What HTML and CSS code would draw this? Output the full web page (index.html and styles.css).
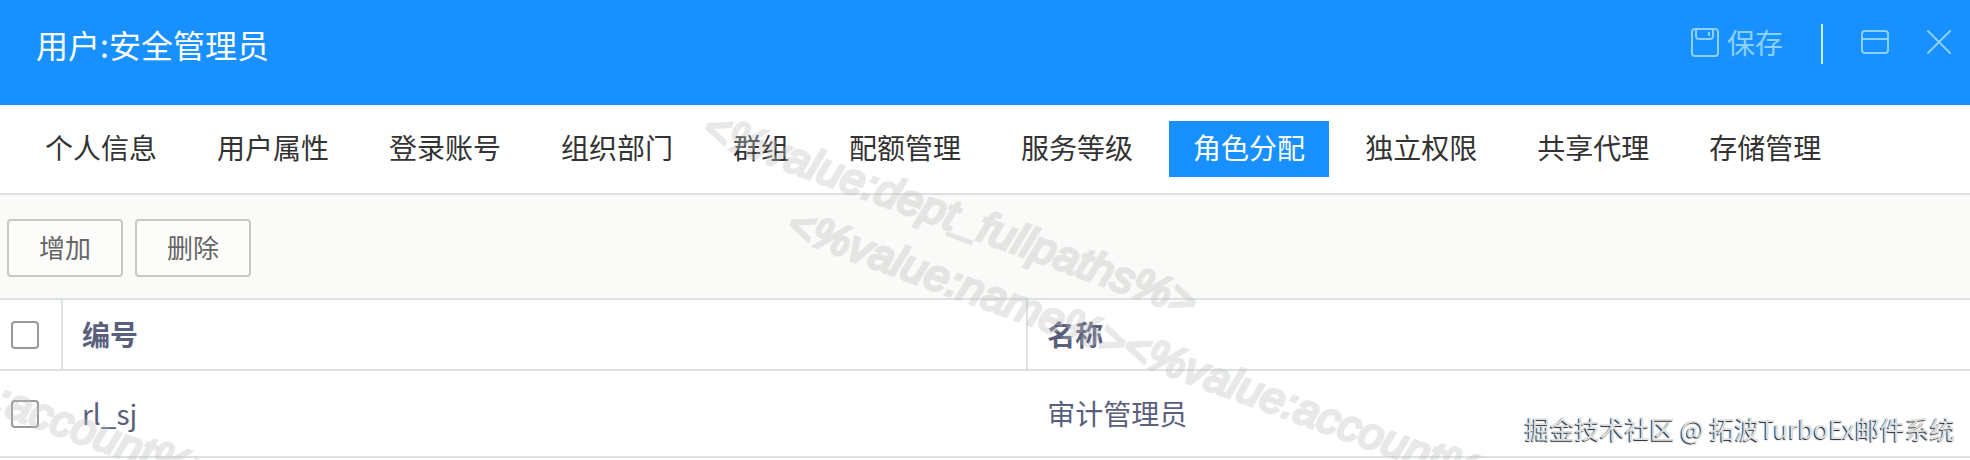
FILE: index.html
```html
<!DOCTYPE html>
<html lang="zh-CN">
<head>
  <meta charset="UTF-8">
  <meta name="viewport" content="width=device-width, initial-scale=1.0">
  <title>用户:安全管理员</title>
  <link rel="stylesheet" href="styles.css">
</head>
<body>

  <header class="header">
    <h1 class="header-title">用户:安全管理员</h1>
    <div class="header-actions">
      <button class="save-button" type="button">
        <svg width="28" height="29" viewBox="0 0 28 29" fill="none" stroke="currentColor" stroke-width="2">
          <rect x="1" y="1" width="26" height="27" rx="3"/>
          <path d="M5 1v7a3 3 0 0 0 3 3h11a3 3 0 0 0 3-3V1M18 4v4"/>
        </svg>
        保存
      </button>
      <span class="divider"></span>
      <button class="icon-button window-button" type="button" aria-label="窗口">
        <svg width="28" height="24" viewBox="0 0 28 24" fill="none" stroke="currentColor" stroke-width="2">
          <rect x="1" y="1" width="26" height="22" rx="3"/>
          <path d="M1 9h26"/>
        </svg>
      </button>
      <button class="icon-button" type="button" aria-label="关闭">
        <svg width="24" height="24" viewBox="0 0 24 24" fill="none" stroke="currentColor" stroke-width="2" stroke-linecap="round">
          <path d="M1 1l22 22M23 1L1 23"/>
        </svg>
      </button>
    </div>
  </header>

  <nav class="tabs">
    <a class="tab" href="#">个人信息</a>
    <a class="tab" href="#">用户属性</a>
    <a class="tab" href="#">登录账号</a>
    <a class="tab" href="#">组织部门</a>
    <a class="tab" href="#">群组</a>
    <a class="tab" href="#">配额管理</a>
    <a class="tab" href="#">服务等级</a>
    <a class="tab active" href="#">角色分配</a>
    <a class="tab" href="#">独立权限</a>
    <a class="tab" href="#">共享代理</a>
    <a class="tab" href="#">存储管理</a>
  </nav>

  <div class="toolbar">
    <button class="tool-button" type="button">增加</button>
    <button class="tool-button" type="button">删除</button>
  </div>

  <table class="role-table">
    <thead>
      <tr>
        <th class="check-cell"><input class="check" type="checkbox" aria-label="全选"></th>
        <th class="code-cell">编号</th>
        <th>名称</th>
      </tr>
    </thead>
    <tbody>
      <tr>
        <td class="check-cell"><input class="check" type="checkbox" aria-label="rl_sj"></td>
        <td>rl_sj</td>
        <td>审计管理员</td>
      </tr>
    </tbody>
  </table>

  <!-- watermarks over the page -->
  <div class="watermark-layer">
    <div class="watermark watermark-main">
      <div>&lt;%value:dept_fullpaths%&gt;</div>
      <div class="watermark-second">&lt;%value:name%&gt;&lt;%value:account%&gt;</div>
    </div>
    <div class="watermark watermark-left">&lt;%value:account%&gt;</div>
    <div class="source">掘金技术社区 @ 拓波TurboEx邮件系统</div>
  </div>

</body>
</html>
```

FILE: styles.css
```css
* {
    box-sizing: border-box;
}

body {
    margin: 0;
    position: relative;
    min-height: 100vh;
    font-family: "Noto Sans CJK SC", "Noto Sans", sans-serif;
    font-size: 28px;
    color: #333;
    background-color: white;
}

button {
    font-family: inherit;
    cursor: pointer;
}

.header {
    display: flex;
    justify-content: space-between;
    height: 105px;
    padding: 0 19px 0 36px;
    color: white;
    background-color: #1890ff;
}

.header-title {
    margin: 0;
    font-size: 32px;
    font-weight: normal;
    line-height: 88px;
}

.header-actions {
    display: flex;
    align-items: center;
    height: 84px;
}

.save-button,
.icon-button {
    display: flex;
    align-items: center;
    gap: 8px;
    padding: 0;
    border: none;
    font-size: 28px;
    line-height: 40px;
    color: #8cd0ff;
    background: none;
}

.divider {
    width: 2px;
    height: 40px;
    margin: 4px 38px 0;
    background-color: #c4f0ff;
}

.window-button {
    margin-right: 38px;
}

.tabs {
    display: flex;
    gap: 12px;
    padding: 16px 21px;
    border-bottom: 2px solid #dce0df;
}

.tab {
    padding: 0 24px 4px;
    line-height: 52px;
    color: #333;
    text-decoration: none;
    white-space: nowrap;
}

.tab.active {
    color: white;
    background-color: #1890ff;
}

.toolbar {
    display: flex;
    gap: 12px;
    padding: 24px 7px 21px;
    border-bottom: 2px solid #dce2e1;
    background-color: #fafaf8;
}

.tool-button {
    width: 116px;
    height: 58px;
    padding: 0 0 4px;
    border: 2px solid #c8c8c6;
    border-radius: 4px;
    font-size: 26px;
    color: #666;
    background-color: #fcfcfa;
}

.role-table {
    width: 100%;
    border-collapse: separate;
    border-spacing: 0;
    table-layout: fixed;
    line-height: 40px;
    color: #5a5f7d;
}

.role-table th,
.role-table td {
    padding: 0 19px 2px;
    border-bottom: 2px solid #dce2e1;
    text-align: left;
}

.role-table th {
    height: 71px;
    border-right: 2px solid #dce2e1;
}

.role-table th:last-child {
    border-right: none;
}

.role-table td {
    height: 87px;
}

.role-table .check-cell {
    width: 63px;
    padding: 0 0 0 11px;
}

.role-table .code-cell {
    width: 49%;
}

.check {
    display: block;
    width: 28px;
    height: 28px;
    margin: 0;
    appearance: none;
    border: 2px solid #999;
    border-radius: 4px;
    background-color: white;
}

.watermark-layer {
    position: absolute;
    inset: 0;
    overflow: hidden;
    pointer-events: none;
}

.watermark {
    position: absolute;
    font-family: "Liberation Sans", Arial, sans-serif;
    font-size: 44px;
    font-style: italic;
    line-height: 62px;
    white-space: nowrap;
    color: #bebebe;
    -webkit-text-stroke: 3px #bebebe;
    opacity: 0.35;
    transform: rotate(20deg);
    transform-origin: 0 0;
}

.watermark-main {
    left: 716px;
    top: 96px;
}

.watermark-second {
    padding-left: 112px;
}

.watermark-left {
    left: -152px;
    top: 310px;
}

.source {
    position: absolute;
    right: 15px;
    bottom: 14px;
    font-size: 25px;
    line-height: 36px;
    color: #e0e0e0;
    text-shadow: -1px 1px 1px #222;
}
```
